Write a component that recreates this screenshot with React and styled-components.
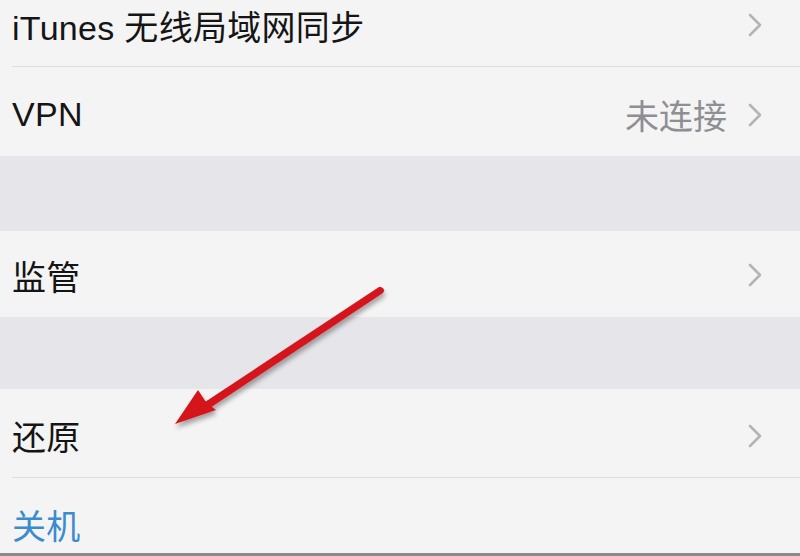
import React from "react";
import styled, { createGlobalStyle } from "styled-components";

const Global = createGlobalStyle`
  html, body { margin: 0; padding: 0; background: #f4f4f4; }
  body { font-family: "Liberation Sans", "Noto Sans CJK SC", sans-serif; }
`;

const Screen = styled.div`
  position: relative;
  width: 800px;
  height: 556px;
  overflow: hidden;
  background: #f4f4f4;
  display: flex;
  flex-direction: column;
  border-bottom: 3px solid #8a8a8a;
  box-sizing: border-box;
`;

const Row = styled.div`
  position: relative;
  flex: none;
  height: ${(p) => p.$h}px;
  padding: ${(p) => p.$pt || 0}px 38px ${(p) => p.$pb || 0}px 12px;
  box-sizing: border-box;
  display: flex;
  align-items: center;
  background: #f4f4f4;
  &::after {
    content: "";
    display: ${(p) => (p.$sep ? "block" : "none")};
    position: absolute;
    left: 12px;
    right: 0;
    bottom: 0;
    height: 1px;
    background: #dedee0;
  }
`;

const Label = styled.span`
  flex: 1;
  font-size: 34px;
  color: ${(p) => (p.$blue ? "#3b8bcf" : "#151515")};
  letter-spacing: 0.3px;
`;

const Detail = styled.span`
  font-size: 34px;
  color: #8e8e93;
  margin-right: 21px;
`;

const Chevron = styled.svg`
  width: 14px;
  height: 24px;
  flex: none;
`;

const Gap = styled.div`
  flex: none;
  height: ${(p) => p.$h}px;
  background: #e6e5ea;
`;

const Arrow = styled.svg`
  position: absolute;
  left: 0;
  top: 0;
  pointer-events: none;
`;

const Chev = () => (
  <Chevron viewBox="0 0 14 24">
    <path d="M2 2 L12 12 L2 22" fill="none" stroke="#b4b4b8" strokeWidth="2.6" strokeLinecap="round" strokeLinejoin="round" />
  </Chevron>
);

export default function App() {
  return (
    <>
      <Global />
      <Screen>
        <Row $h={67} $pb={17} $sep>
          <Label>iTunes 无线局域网同步</Label>
          <Chev />
        </Row>
        <Row $h={89} $pt={6}>
          <Label>VPN</Label>
          <Detail>未连接</Detail>
          <Chev />
        </Row>
        <Gap $h={75} />
        <Row $h={86} $pt={2}>
          <Label>监管</Label>
          <Chev />
        </Row>
        <Gap $h={72} />
        <Row $h={89} $pt={4} $sep>
          <Label>还原</Label>
          <Chev />
        </Row>
        <Row $h={75} $pt={17}>
          <Label $blue>关机</Label>
        </Row>
        <Arrow width="800" height="556" viewBox="0 0 800 556">
          <defs>
            <filter id="arrowShadow" x="-20%" y="-20%" width="140%" height="140%">
              <feGaussianBlur in="SourceAlpha" stdDeviation="2.5" />
              <feOffset dx="1" dy="4" />
              <feComponentTransfer>
                <feFuncA type="linear" slope="0.35" />
              </feComponentTransfer>
              <feMerge>
                <feMergeNode />
                <feMergeNode in="SourceGraphic" />
              </feMerge>
            </filter>
          </defs>
          <g filter="url(#arrowShadow)" fill="#d4161c">
            <path d="M381 287 Q386 289 383 293 L210 408 L205 402 L379 287 Z" />
            <path d="M175 424 L198 390 L206 402 L216 410 Z" />
          </g>
        </Arrow>
      </Screen>
    </>
  );
}
